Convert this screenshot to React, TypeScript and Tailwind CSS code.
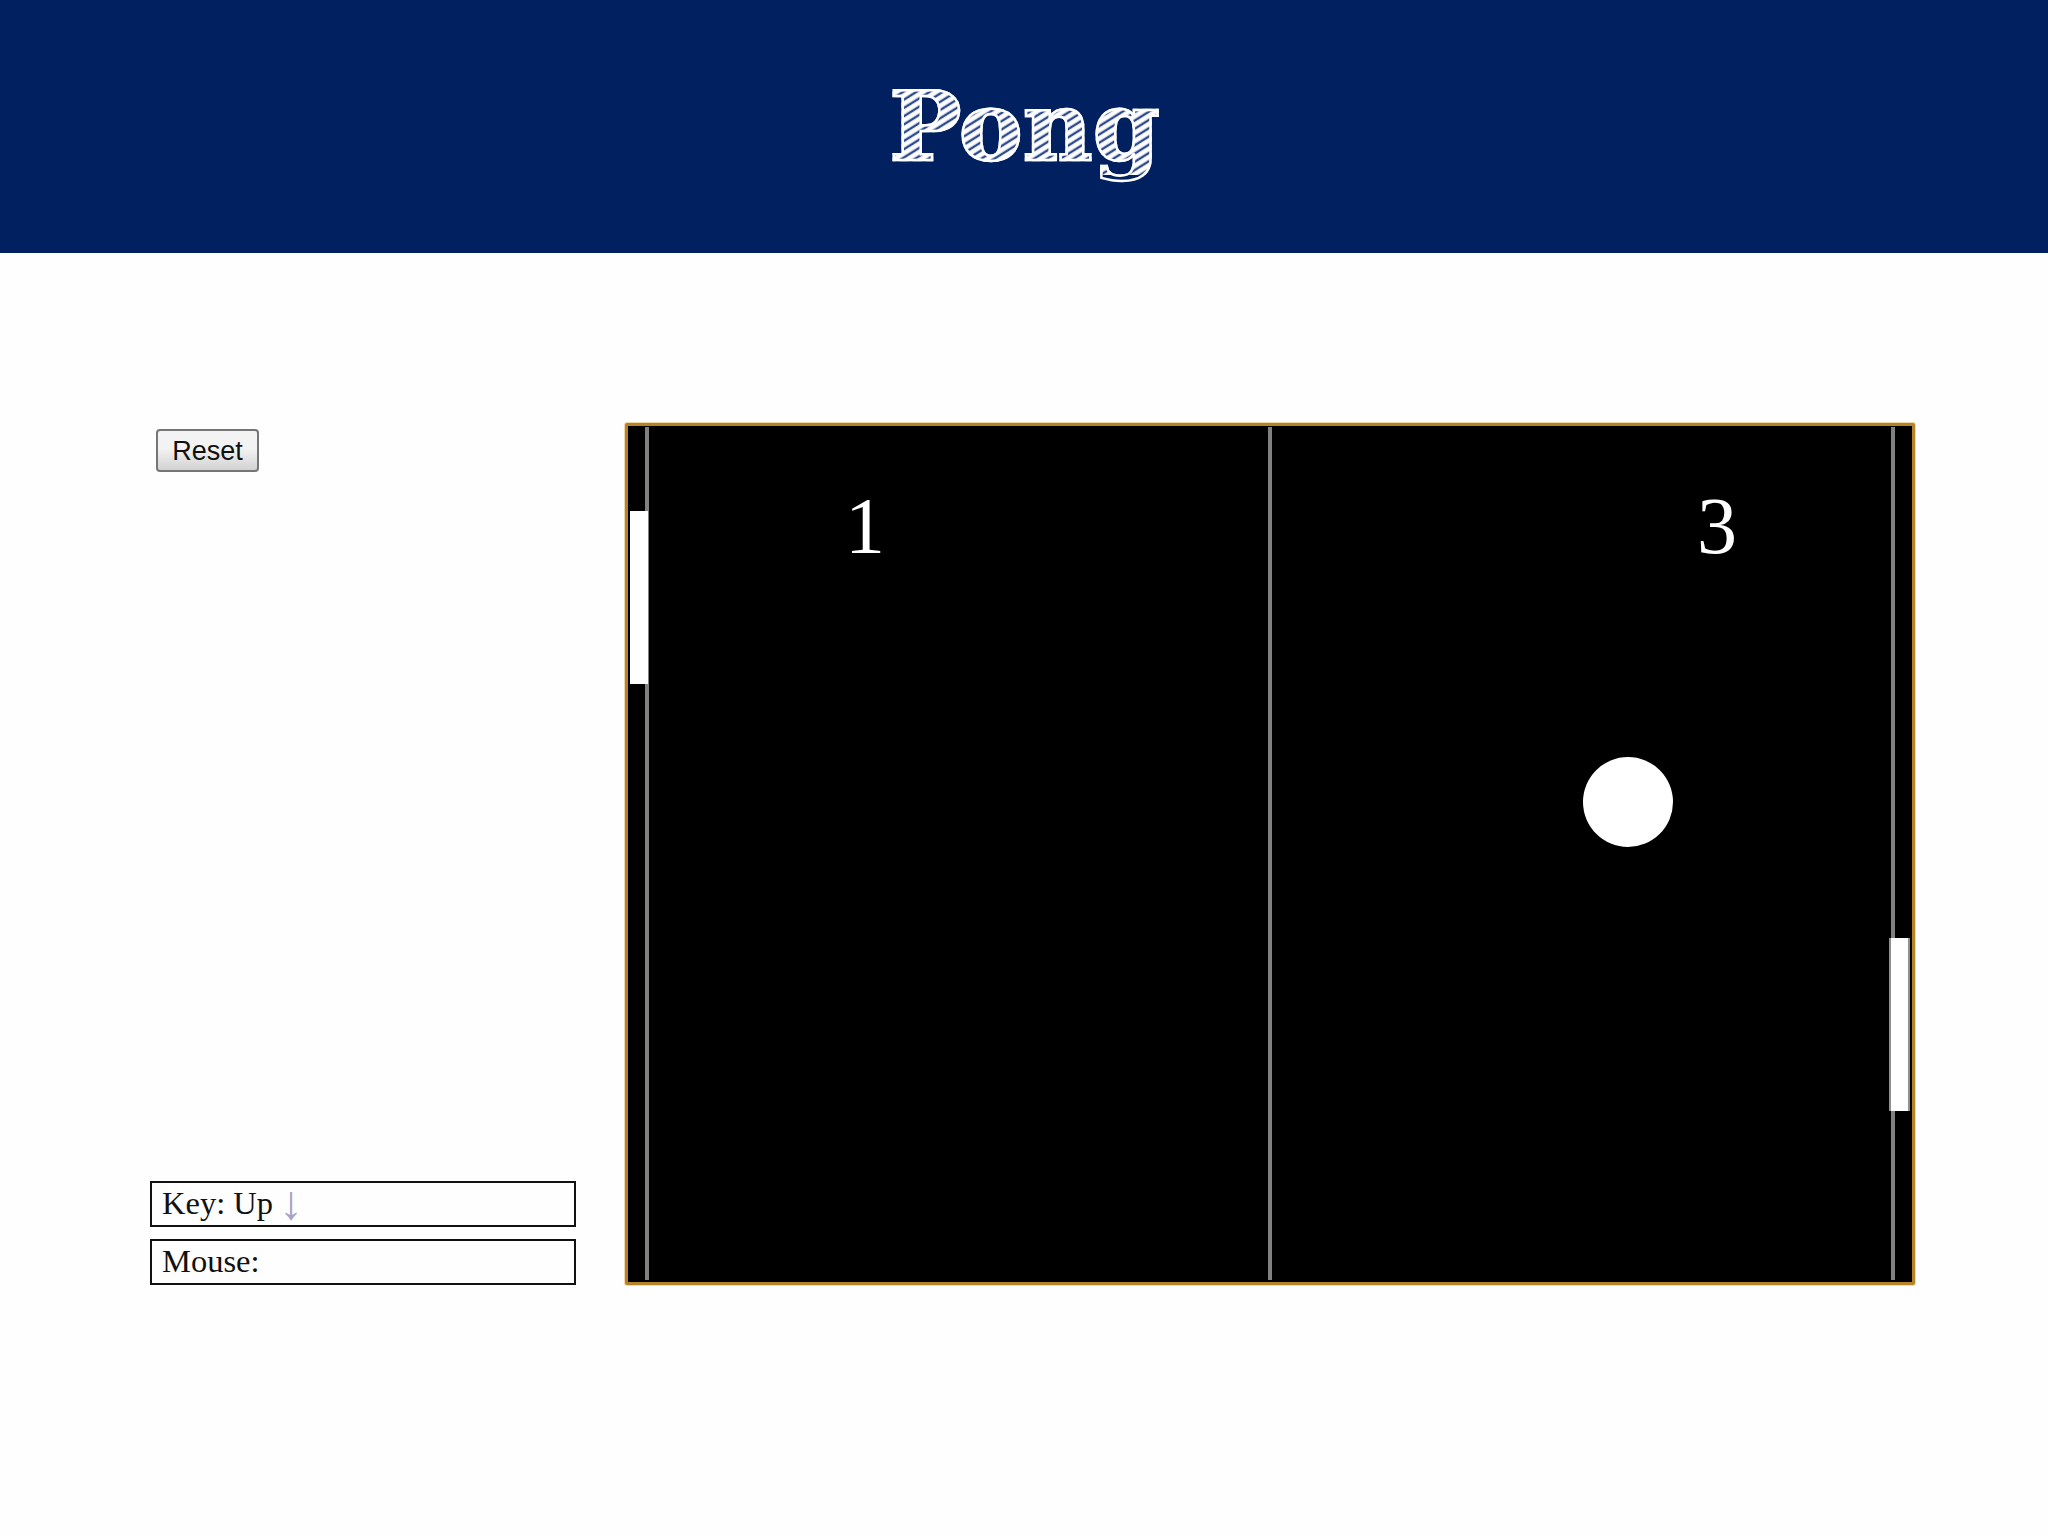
/* Pong page — header, side controls and the game board. */

function Readout({ children }: { readonly children: React.ReactNode }): React.JSX.Element {
  return (
    <div className="flex h-[46px] items-center border-2 border-[#111111] pb-[2px] pl-[10px] font-['Liberation_Serif',serif] text-[32.5px] leading-none text-[#111111]">
      {children}
    </div>
  );
}

export default function App(): React.JSX.Element {
  return (
    <div className="min-h-[1536px] bg-[#fefefe]">
      <header className="flex h-[253px] items-center justify-center bg-[#002060] pt-[1px] pl-[1px]">
        <h1 className="bg-[repeating-linear-gradient(148deg,#ffffff_0px,#ffffff_2px,#c4cee6_3px,#2f4a8c_4px,#2f4a8c_5px,#dfe5f2_6px,#ffffff_7px)] bg-clip-text font-['DejaVu_Serif',serif] text-[96px] leading-none font-bold tracking-[0px] text-transparent [-webkit-text-stroke:2.5px_#ffffff]">
          Pong
        </h1>
      </header>

      <main className="flex gap-[49px] pt-[170px] pl-[150px]">
        {/* Controls */}
        <div className="flex h-[862px] w-[426px] flex-col justify-between">
          <button className="mt-[6px] ml-[6px] h-[43px] w-[103px] rounded-[4px] border-2 border-[#767676] bg-[linear-gradient(#f3f3f3_45%,#d2d2d2)] pt-[2px] font-['Liberation_Sans',sans-serif] text-[27px] leading-none text-[#111111]">
            Reset
          </button>
          <div className="flex flex-col gap-[12px]">
            <Readout>
              Key: Up <span className="ml-[6px] text-[48px] text-[#a8a3c6]">↓</span>
            </Readout>
            <Readout>Mouse:</Readout>
          </div>
        </div>

        {/* Game board: everything inside sits on the free canvas */}
        <div className="relative h-[862px] w-[1290px] rounded-[2px] border-[3px] border-[#b5842a] bg-black shadow-[0_0_0_1px_#f0d9a8]">
          <div className="absolute top-[1px] bottom-[2px] left-[17px] w-[4px] bg-[#808080]" />
          <div className="absolute top-[1px] bottom-[2px] left-[640px] w-[4px] bg-[#808080]" />
          <div className="absolute top-[1px] bottom-[2px] left-[1263px] w-[4px] bg-[#808080]" />

          <div className="absolute top-[85px] left-[2px] h-[173px] w-[18px] bg-white" />
          <div className="absolute top-[512px] left-[1261px] h-[173px] w-[21px] border-x-2 border-[#909090] bg-white" />
          <div className="absolute top-[331px] left-[955px] h-[90px] w-[90px] rounded-full bg-white" />

          <span className="absolute top-[60px] left-[217px] font-['Liberation_Serif',serif] text-[80px] leading-none text-white">
            1
          </span>
          <span className="absolute top-[60px] left-[1069px] font-['Liberation_Serif',serif] text-[80px] leading-none text-white">
            3
          </span>
        </div>
      </main>
    </div>
  );
}
